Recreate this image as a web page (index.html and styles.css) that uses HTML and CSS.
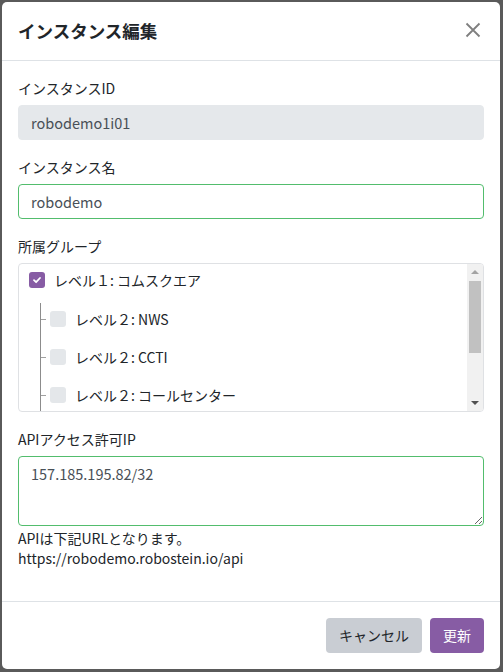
FILE: index.html
```html
<!DOCTYPE html>
<html lang="ja">
<head>
<meta charset="utf-8">
<link rel="stylesheet" href="styles.css">
</head>
<body>
<div class="modal">
  <div class="modal-header">
    <h5 class="modal-title">インスタンス編集</h5>
    <span class="close"><svg width="16" height="16" viewBox="0 0 16 16"><path d="M1.5 1.5 L14.5 14.5 M14.5 1.5 L1.5 14.5" stroke="#7f7f7f" stroke-width="1.8" fill="none"/></svg></span>
  </div>
  <div class="modal-body">
    <div class="group">
      <label class="label">インスタンスID</label>
      <div class="input disabled">robodemo1i01</div>
    </div>
    <div class="group">
      <label class="label">インスタンス名</label>
      <div class="input valid">robodemo</div>
    </div>
    <div class="group">
      <label class="label">所属グループ</label>
      <div class="tree-box">
        <div class="tree">
          <div class="row">
            <span class="cb checked"><svg width="10" height="10" viewBox="0 0 10 10"><path d="M2 5.2 L4.1 7.2 L8 3" stroke="#fff" stroke-width="1.8" fill="none" stroke-linecap="round" stroke-linejoin="round"/></svg></span>
            <span class="row-text">レベル１: コムスクエア</span>
          </div>
          <div class="children">
            <div class="row child"><span class="dash"></span><span class="cb"></span><span class="row-text">レベル２: NWS</span></div>
            <div class="row child"><span class="dash"></span><span class="cb"></span><span class="row-text">レベル２: CCTI</span></div>
            <div class="row child"><span class="dash"></span><span class="cb"></span><span class="row-text">レベル２: コールセンター</span></div>
          </div>
        </div>
        <div class="scrollbar">
          <div class="sb-btn"><span class="arrow-up"></span></div>
          <div class="sb-track"><div class="sb-thumb"></div></div>
          <div class="sb-btn"><span class="arrow-down"></span></div>
        </div>
      </div>
    </div>
    <div class="group">
      <label class="label">APIアクセス許可IP</label>
      <textarea class="textarea">157.185.195.82/32</textarea>
      <div class="help">APIは下記URLとなります。<br>https://robodemo.robostein.io/api</div>
    </div>
  </div>
  <div class="modal-footer">
    <button class="btn btn-cancel">キャンセル</button>
    <button class="btn btn-primary">更新</button>
  </div>
</div>
</body>
</html>
```

FILE: styles.css
```css
* { box-sizing: border-box; }
html, body { margin: 0; padding: 0; }
body {
  background: #5a5a5a;
  font-family: "Noto Sans CJK JP", "Noto Sans", sans-serif;
  font-size: 14px;
  color: #212529;
  padding: 2px 0 0 2px;
  height: 672px;
  overflow: hidden;
}
.modal {
  width: 498px;
  background: #fff;
  border-radius: 5px;
}
.modal-header {
  display: flex;
  justify-content: space-between;
  align-items: center;
  padding: 16px;
  border-bottom: 1px solid #dee2e6;
}
.modal-title {
  margin: 0;
  font-size: 17.5px;
  line-height: 26px;
  font-weight: 700;
}
.close { display: flex; margin-right: 3px; margin-top: -3px; }
.modal-body { padding: 17px 16px 16px; }
.group { margin-bottom: 17px; }
.label {
  display: block;
  line-height: 20px;
  margin-bottom: 7px;
}
.input {
  height: 35px;
  border: 1px solid #ced4da;
  border-radius: 4px;
  padding: 6px 12px;
  line-height: 21px;
  color: #495057;
  font-size: 14.5px;
}
.input.disabled { background: #e5e8eb; border-color: #e5e8eb; }
.input.valid { border-color: #52bd6d; }
.tree-box {
  height: 149px;
  border: 1px solid #dfe1e4;
  border-radius: 4px;
  display: flex;
  overflow: hidden;
}
.tree {
  flex: 1;
  overflow: hidden;
  padding: 4px 0 0 10px;
}
.row {
  display: flex;
  align-items: center;
  height: 24px;
  gap: 9px;
}
.cb {
  width: 16px;
  height: 16px;
  border-radius: 3px;
  background: #e4e7ea;
  display: flex;
  align-items: center;
  justify-content: center;
  flex: none;
}
.cb.checked { background: #875ca4; }
.row-text { font-size: 14px; white-space: nowrap; }
.children {
  margin: 11px 0 0 11px;
  border-left: 1px solid #8c8c8c;
  padding-top: 4px;
  height: 120px;
  display: flex;
  flex-direction: column;
  gap: 14px;
}
.row.child { gap: 0; }
.dash { width: 5px; height: 1px; background: #a0a0a0; margin-right: 4px; }
.row.child .cb { margin-right: 9px; }
.scrollbar {
  width: 16px;
  background: #f1f1f1;
  display: flex;
  flex-direction: column;
}
.sb-btn {
  height: 16px;
  display: flex;
  align-items: center;
  justify-content: center;
}
.arrow-up {
  width: 0; height: 0;
  border-left: 4px solid transparent;
  border-right: 4px solid transparent;
  border-bottom: 4px solid #a3a3a3;
}
.arrow-down {
  width: 0; height: 0;
  border-left: 4px solid transparent;
  border-right: 4px solid transparent;
  border-top: 4px solid #505050;
}
.sb-track { flex: 1; padding: 1px 2px 0 2px; }
.sb-thumb { height: 72px; background: #c1c1c1; }
.textarea {
  display: block;
  width: 100%;
  height: 70px;
  border: 1px solid #52bd6d;
  border-radius: 4px;
  padding: 6px 12px;
  font-family: "Noto Sans CJK JP", "Noto Sans", sans-serif;
  font-size: 14.5px;
  line-height: 21px;
  color: #495057;
  resize: vertical;
  margin: 0;
  outline: none;
}
.help { margin-top: 2px; line-height: 20px; }
.modal-footer {
  display: flex;
  justify-content: flex-end;
  gap: 8px;
  padding: 16px;
  border-top: 1px solid #dee2e6;
}
.btn {
  font-family: "Noto Sans CJK JP", "Noto Sans", sans-serif;
  font-size: 14px;
  line-height: 21px;
  padding: 6px 12px;
  border: 1px solid transparent;
  border-radius: 4px;
}
.btn-cancel { background: #c9cdd3; color: #212529; }
.btn-primary { background: #875ca4; color: #fff; }
```
